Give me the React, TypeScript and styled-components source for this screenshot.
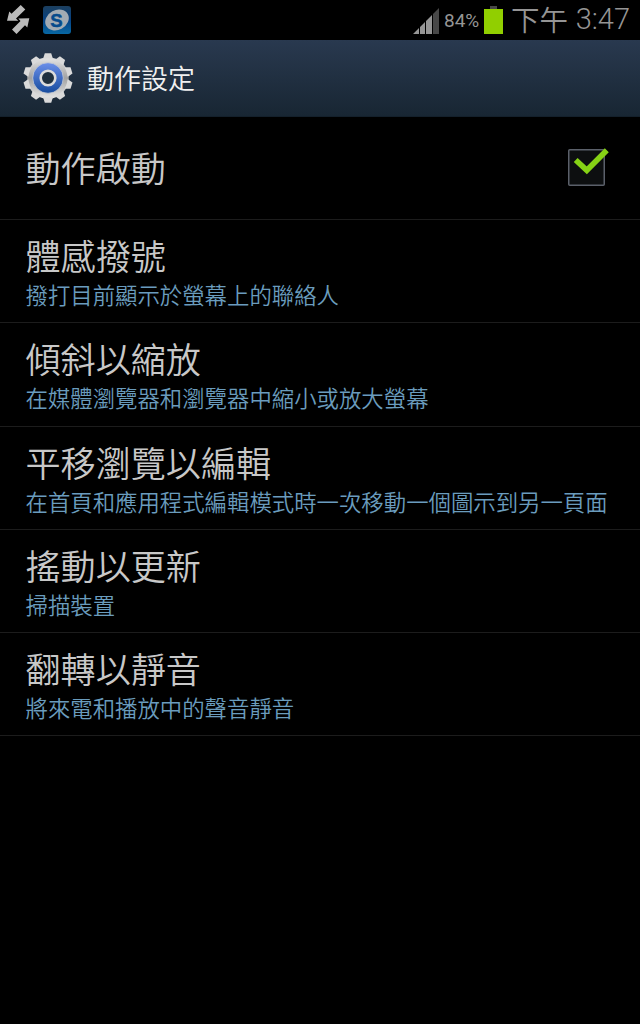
import React from "react";
import styled, { createGlobalStyle } from "styled-components";

const Global = createGlobalStyle`
  html, body { margin: 0; background: #000; }
  * { box-sizing: border-box; }
  svg { display: block; flex: none; }
`;

const Screen = styled.main`
  width: 640px;
  height: 1024px;
  background: #000;
  overflow: hidden;
  font-family: Roboto, "Noto Sans CJK TC", sans-serif;
  font-weight: 350;
`;

const StatusBar = styled.header`
  display: flex;
  align-items: center;
  justify-content: space-between;
  height: 40px;
  padding: 0 10px 0 5px;
  color: #959595;
`;

const StatusGroup = styled.div<{ $gap: number }>`
  display: flex;
  align-items: center;
  gap: ${(p) => p.$gap}px;
  height: 40px;
`;

const Percent = styled.span`
  width: 37px;
  margin: 1px 3px 0 4px;
  font-size: 19px;
  font-weight: 400;
  line-height: 40px;
  white-space: nowrap;
`;

const Clock = styled.time`
  display: flex;
  justify-content: space-between;
  width: 119px;
  margin-left: 8px;
  font-size: 28.5px;
  line-height: 40px;
  white-space: nowrap;
`;

const ClockPeriod = styled.span`
  padding-top: 3px;
  line-height: 39px;
`;

const ClockDigits = styled.span`
  padding-top: 1px;
  font-size: 29px;
  line-height: 39px;
`;

const TitleBar = styled.div`
  display: flex;
  align-items: center;
  gap: 14px;
  height: 77px;
  padding: 0 23px;
  background: linear-gradient(#29394f, #182633);
  border-bottom: 1px solid #14202b;
`;

const Heading = styled.h1`
  margin: 0;
  padding-top: 4px;
  color: #f0f0f0;
  font-size: 27px;
  font-weight: 350;
  line-height: 72px;
`;

const List = styled.ul`
  margin: 0;
  padding: 0;
  list-style: none;
`;

const Row = styled.li<{ $toggle?: boolean }>`
  display: flex;
  align-items: center;
  justify-content: space-between;
  height: ${(p) => (p.$toggle ? 103 : 103.25)}px;
  padding: 0 30px 0 25.5px;
  border-bottom: 1px solid #1c1c1c;
`;

const RowText = styled.div<{ $single?: boolean }>`
  display: flex;
  flex-direction: column;
  padding-top: ${(p) => (p.$single ? 4 : 6)}px;
`;

const RowTitle = styled.span`
  color: #c8c8c8;
  font-size: 35.1px;
  line-height: 44px;
  white-space: nowrap;
`;

const RowNote = styled.span`
  color: #6a9cbd;
  font-size: 22.4px;
  line-height: 32px;
  white-space: nowrap;
`;

const rows = [
  { title: "體感撥號", note: "撥打目前顯示於螢幕上的聯絡人" },
  { title: "傾斜以縮放", note: "在媒體瀏覽器和瀏覽器中縮小或放大螢幕" },
  { title: "平移瀏覽以編輯", note: "在首頁和應用程式編輯模式時一次移動一個圖示到另一頁面" },
  { title: "搖動以更新", note: "掃描裝置" },
  { title: "翻轉以靜音", note: "將來電和播放中的聲音靜音" },
];

const SyncIcon = () => (
  <svg width="26" height="30" viewBox="5 5 26 30" fill="#bababa">
    <path d="M7 20.800 L9.300 11.500 L11.500 13.700 L20.700 5 L25.300 9.500 L16 18.500 L18.300 20.800 Z" />
    <path d="M29.300 18.200 L27.300 27.500 L25 25.300 L16.500 34 L12 29.600 L20.500 21 L18.300 18.600 Z" />
  </svg>
);

const AppBadge = () => (
  <svg width="28" height="28" viewBox="0 0 28 28">
    <defs>
      <linearGradient id="badge" x1="0" y1="0" x2="0" y2="1">
        <stop offset="0" stopColor="#1c3f5e" />
        <stop offset="0.5" stopColor="#064284" />
        <stop offset="1" stopColor="#0868a4" />
      </linearGradient>
    </defs>
    <rect width="28" height="28" rx="3" fill="url(#badge)" />
    <ellipse cx="14" cy="14" rx="12.3" ry="9.8" fill="#a3abb3" transform="rotate(-28 14 14)" />
    <text x="13.500" y="20.7" textAnchor="middle" fontFamily="Liberation Sans, sans-serif" fontWeight="700" fontSize="18.5" fill="#064a8c" stroke="#064a8c" strokeWidth="0.5">S</text>
  </svg>
);

const SignalIcon = () => (
  <svg width="27" height="28" viewBox="0 0 27 28">
    <path d="M0 28 L6 22 V28Z M7 21 L12 16 V28 H7Z M13 15 L19 9 V28 H13Z" fill="#969696" />
    <path d="M20 8 L26 2 V28 H20Z" fill="#484848" />
  </svg>
);

const BatteryIcon = () => (
  <svg width="19" height="28" viewBox="0 0 19 28">
    <rect x="6" width="7" height="4" fill="#484848" />
    <rect y="3" width="19" height="25" fill="#91cf00" />
  </svg>
);

const teeth = Array.from({ length: 10 }, (_, i) => i * 36);

const GearIcon = () => (
  <svg width="50" height="50" viewBox="-25 -25 50 50">
    <defs>
      <linearGradient id="metal" gradientUnits="userSpaceOnUse" x1="0" y1="-25" x2="0" y2="25">
        <stop offset="0" stopColor="#f4f4f4" />
        <stop offset="0.5" stopColor="#a2a2a2" />
        <stop offset="1" stopColor="#f4f4f4" />
      </linearGradient>
      <linearGradient id="core" x1="0" y1="0" x2="0" y2="1">
        <stop offset="0" stopColor="#6b8fea" />
        <stop offset="1" stopColor="#164b9d" />
      </linearGradient>
    </defs>
    <circle r="20.800" fill="url(#metal)" />
    {teeth.map((a) => (
      <path key={a} d="M-5 -19 L-3.200 -24.700 H3.200 L5 -19Z" fill="#dadada" transform={`rotate(${a})`} />
    ))}
    <circle r="19.500" fill="url(#metal)" />
    <circle r="15.300" fill="url(#core)" stroke="#c9cdd4" strokeWidth="0.800" />
    <circle r="7.300" fill="#1f303f" stroke="#dcdcdc" strokeWidth="2.600" />
  </svg>
);

const CheckBox = () => (
  <svg width="44" height="46" viewBox="0 0 44 46" role="img" aria-label="checked">
    <rect x="2.750" y="4.750" width="35.500" height="35.500" rx="1" fill="#0d0f10" stroke="#5b606a" strokeWidth="1.500" />
    <path d="M9.700 15 L20.800 25.300 L40.800 5.300" fill="none" stroke="#86d215" strokeWidth="5.600" />
  </svg>
);

export default function App() {
  return (
    <Screen lang="zh-TW">
      <Global />
      <StatusBar>
        <StatusGroup $gap={12}>
          <SyncIcon />
          <AppBadge />
        </StatusGroup>
        <StatusGroup $gap={0}>
          <SignalIcon />
          <Percent>84%</Percent>
          <BatteryIcon />
          <Clock>
            <ClockPeriod>下午</ClockPeriod>
            <ClockDigits>3:47</ClockDigits>
          </Clock>
        </StatusGroup>
      </StatusBar>
      <TitleBar>
        <GearIcon />
        <Heading>動作設定</Heading>
      </TitleBar>
      <List>
        <Row $toggle>
          <RowText $single>
            <RowTitle>動作啟動</RowTitle>
          </RowText>
          <CheckBox />
        </Row>
        {rows.map((r) => (
          <Row key={r.title}>
            <RowText>
              <RowTitle>{r.title}</RowTitle>
              <RowNote>{r.note}</RowNote>
            </RowText>
          </Row>
        ))}
      </List>
    </Screen>
  );
}
